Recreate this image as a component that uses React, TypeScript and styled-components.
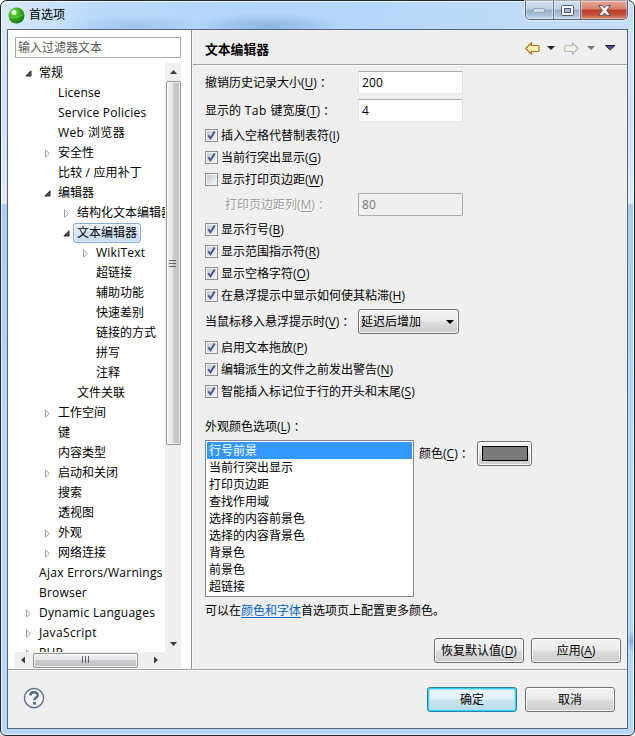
import React from "react";
import styled, { createGlobalStyle, css } from "styled-components";

const GlobalStyle = createGlobalStyle`
  html, body { margin: 0; padding: 0; background: #fff; }
  * { box-sizing: border-box; }
  body {
    font: 12px/16px "Open Sans", "Noto Sans CJK SC", sans-serif;
    color: #000;
    overflow: hidden;
  }
`;

const Window = styled.div`
  position: relative;
  width: 635px;
  height: 736px;
  padding: 0 6px 6px;
  display: flex;
  flex-direction: column;
  border: 1px solid #23272e;
  border-radius: 7px 7px 6px 6px;
  box-shadow: inset 0 0 0 1px rgba(255, 255, 255, 0.75);
  background:
    radial-gradient(ellipse 75px 13px at 268px 25px, rgba(100, 145, 200, 0.5), transparent),
    radial-gradient(ellipse 70px 12px at 135px 25px, rgba(120, 165, 215, 0.4), transparent),
    radial-gradient(ellipse 6px 12px at 632px 640px, rgba(90, 120, 190, 0.6), transparent),
    linear-gradient(105deg, #dcebfb 0, #bcdafa 90px, #b3d6fb 220px, rgba(179, 214, 251, 0) 430px) 0 0 / 100% 29px no-repeat,
    linear-gradient(90deg, #b7d8fa 60%, #c6def6) 0 0 / 100% 29px no-repeat,
    linear-gradient(#d5e6fa 0, #cfe2fa 120px, #dfecfa 202px, #abcdf2 204px, #b9d9fc 480px, #b6d8fc 100%);
`;

const TitleBar = styled.header`
  height: 28px;
  flex: none;
  display: flex;
  align-items: flex-start;
`;

const Orb = styled.svg`
  margin: 6px 0 0 1px;
  flex: none;
`;

const Title = styled.h1`
  margin: 6px 0 0 4px;
  flex: 1;
  font: inherit;
`;

const CaptionButtons = styled.div`
  display: flex;
  height: 19px;
  width: 103px;
  border: 1px solid #4e5f78;
  border-top: 0;
  border-radius: 0 0 5px 5px;
  overflow: hidden;
  box-shadow: 0 0 0 1px rgba(255, 255, 255, 0.6);
`;

const CaptionButton = styled.button<{ $w: number; $close?: boolean }>`
  width: ${(p) => p.$w}px;
  padding: 0;
  border: 0;
  border-right: ${(p) => (p.$close ? "0" : "1px solid #65788f")};
  display: flex;
  align-items: center;
  justify-content: center;
  box-shadow: inset 0 0 0 1px rgba(255, 255, 255, 0.4);
  background: ${(p) =>
    p.$close
      ? "linear-gradient(#e9a697 0, #d9806e 45%, #b83a25 50%, #c6503a 75%, #d98b6a 100%)"
      : "linear-gradient(#d3e1f1 0, #bed0e5 45%, #97adc9 50%, #a8bdd8 75%, #c5daf0 100%)"};
`;

const Client = styled.div`
  flex: 1;
  min-height: 0;
  display: flex;
  flex-direction: column;
  border: 1px solid #566676;
  background: #efefef;
`;

const Body = styled.div`
  height: 639px;
  flex: none;
  display: flex;
`;

const Sidebar = styled.aside`
  width: 184px;
  flex: none;
  padding: 7px 10px 0 7px;
  background: #fff;
  border-right: 1px solid #909090;
  display: flex;
  flex-direction: column;
`;

const Filter = styled.div`
  height: 21px;
  flex: none;
  border: 1px solid #a9a9ad;
  padding: 2px 2px 0;
  line-height: 15px;
  color: #555;
`;

const TreeArea = styled.div`
  margin-top: 5px;
  height: 589px;
  flex: none;
  display: flex;
`;

const Tree = styled.ul`
  width: 150px;
  margin: 0;
  padding: 0;
  list-style: none;
  overflow: hidden;
`;

const TreeRow = styled.li<{ $level: number }>`
  height: 20px;
  display: flex;
  align-items: center;
  padding-left: ${(p) => 9 + p.$level * 19}px;
  white-space: nowrap;
`;

const Twisty = styled.svg`
  width: 9px;
  height: 9px;
  flex: none;
  margin-right: 2px;
`;

const TreeLabel = styled.span<{ $selected?: boolean; $track?: number }>`
  height: 20px;
  padding: 0 3px;
  line-height: 17px;
  border: 1px solid transparent;
  border-radius: 3px;
  letter-spacing: ${(p) => p.$track ?? 0}px;
  ${(p) =>
    p.$selected &&
    css`
      border-color: #84acdd;
      background: linear-gradient(#ebf3fd, #c4dcfa);
      box-shadow: inset 0 0 0 1px rgba(255, 255, 255, 0.45);
    `}
`;

const VScroll = styled.div`
  width: 16px;
  display: flex;
  flex-direction: column;
  align-items: center;
  background: #efefef;
`;

const HScroll = styled.div`
  height: 16px;
  width: 166px;
  padding-right: 17px;
  display: flex;
  align-items: center;
  background: #efefef;
`;

const Arrow = styled.svg`
  flex: none;
  display: block;
`;

const Thumb = styled.div<{ $vertical?: boolean }>`
  flex: none;
  display: flex;
  align-items: center;
  justify-content: center;
  border: 1px solid #979797;
  border-radius: 2px;
  box-shadow: inset 0 0 0 1px rgba(255, 255, 255, 0.7);
  ${(p) =>
    p.$vertical
      ? css`
          width: 15px;
          height: 364px;
          background: linear-gradient(90deg, #f4f4f4, #e4e4e6 45%, #cdcdd1 50%, #bcbcc2);
        `
      : css`
          width: 105px;
          height: 15px;
          background: linear-gradient(#f4f4f4, #e4e4e6 45%, #cdcdd1 50%, #bcbcc2);
        `}
`;

const Spacer = styled.div`
  flex: 1;
`;

const Main = styled.main`
  flex: 1;
  display: flex;
  flex-direction: column;
  border-left: 1px solid #fafafa;
`;

const PageHeader = styled.div`
  height: 35px;
  flex: none;
  padding: 2px 10px 0 12px;
  display: flex;
  align-items: center;
  border-bottom: 1px solid #a0a0a0;
  box-shadow: 0 1px 0 #fafafa;
`;

const PageTitle = styled.h2`
  margin: 1px 0 0;
  flex: 1;
  font-size: 12.8px;
  line-height: 18px;
  font-weight: 700;
`;

const Form = styled.div`
  padding: 6px 6px 0 12px;
  display: flex;
  flex-direction: column;
`;

const FieldRow = styled.div<{ $h: number; $top?: number; $indent?: number }>`
  height: ${(p) => p.$h}px;
  margin-top: ${(p) => p.$top ?? 0}px;
  padding-left: ${(p) => p.$indent ?? 0}px;
  display: flex;
  align-items: center;
`;

const FieldLabel = styled.label<{ $w?: number; $disabled?: boolean }>`
  width: ${(p) => (p.$w ? `${p.$w}px` : "auto")};
  white-space: nowrap;
  ${(p) =>
    p.$disabled &&
    css`
      color: #9d9d9d;
      text-shadow: 1px 1px 0 #fff;
    `}
`;

const Colon = styled.span`
  padding-left: 3px;
`;

const Wide = styled.span`
  letter-spacing: 0.5px;
`;

const Key = styled.span`
  text-decoration: underline;
  text-underline-offset: 2px;
`;

const TextBox = styled.div<{ $disabled?: boolean }>`
  width: 105px;
  height: 23px;
  padding: 2px 3px;
  line-height: 17px;
  letter-spacing: 0.2px;
  border: 1px solid;
  border-radius: 1px;
  ${(p) =>
    p.$disabled
      ? css`
          border-color: #adadad;
          color: #777;
          background: #efefef;
        `
      : css`
          border-color: #abadb3 #dbdfe6 #e3e9ef #e2e3ea;
          background: #fff;
        `}
`;

const CheckRow = styled.label`
  height: 22px;
  display: flex;
  align-items: center;
  gap: 3px;
  white-space: nowrap;
`;

const CheckBox = styled.span`
  width: 13px;
  height: 13px;
  flex: none;
  margin-bottom: 1px;
  border: 1px solid #8e8f8f;
  padding: 1px;
  background: #f4f4f4;
`;

const CheckWell = styled.span`
  display: flex;
  width: 9px;
  height: 9px;
  background: linear-gradient(135deg, #c3c8cf, #f3f3f4);
`;

const buttonFace = css`
  border: 1px solid #707070;
  border-radius: 3px;
  background: linear-gradient(#f3f3f3 0, #ebebeb 48%, #dddddd 52%, #cdcdcd 100%);
  box-shadow: inset 0 0 0 1px rgba(255, 255, 255, 0.85);
`;

const Combo = styled.div`
  ${buttonFace}
  width: 101px;
  height: 25px;
  padding: 0 4px 0 2px;
  display: flex;
  align-items: center;
  justify-content: space-between;
`;

const PushButton = styled.button<{ $primary?: boolean }>`
  ${buttonFace}
  width: 90px;
  height: 25px;
  padding: 0;
  font: inherit;
  color: #000;
  ${(p) =>
    p.$primary &&
    css`
      border-color: #2c7fae;
      background: linear-gradient(#edf6fb 0, #e0f0f8 48%, #cbe4f1 52%, #b9dbec 100%);
      box-shadow: inset 0 0 0 1px #35d0f7, inset 0 0 0 2px #a5e6f8;
    `}
`;

const ListLabel = styled.div`
  margin-top: 16px;
  height: 17px;
  line-height: 16px;
`;

const ListRow = styled.div`
  margin-top: 4px;
  display: flex;
  align-items: flex-start;
`;

const ListBox = styled.ul`
  width: 209px;
  height: 157px;
  margin: 0;
  padding: 1px;
  list-style: none;
  border: 1px solid #828790;
  background: #fff;
`;

const ListItem = styled.li<{ $selected?: boolean }>`
  height: 17px;
  line-height: 17px;
  padding-left: 2px;
  color: ${(p) => (p.$selected ? "#fff" : "#000")};
  background: ${(p) => (p.$selected ? "#3399ff" : "transparent")};
`;

const ColorField = styled.div`
  margin: 1px 0 0 5px;
  height: 25px;
  display: flex;
  align-items: center;
`;

const ColorButton = styled.button`
  ${buttonFace}
  width: 55px;
  height: 25px;
  padding: 0 0 0 4px;
  display: flex;
  align-items: center;
`;

const Swatch = styled.span`
  width: 46px;
  height: 15px;
  border: 1px solid #000;
  background: #7b7b7b;
`;

const Hint = styled.p`
  margin: 6px 0 0;
  height: 17px;
  line-height: 16px;
`;

const Link = styled.a`
  color: #0066cc;
  text-decoration: underline;
  text-underline-offset: 2px;
`;

const Actions = styled.div`
  margin-top: 18px;
  display: flex;
  justify-content: flex-end;
  gap: 7px;
`;

const Footer = styled.footer`
  flex: 1;
  padding: 17px 12px 0 15px;
  display: flex;
  align-items: flex-start;
  gap: 8px;
  border-top: 1px solid #a0a0a0;
  box-shadow: inset 0 1px 0 #fafafa;
`;

type Node = { text: string; level: number; state?: "open" | "closed"; selected?: boolean; track?: number };

const nodes: Node[] = [
  { text: "常规", level: 0, state: "open" },
  { text: "License", level: 1, track: 0.15 },
  { text: "Service Policies", level: 1, track: 0.24 },
  { text: "Web 浏览器", level: 1, track: 0.4 },
  { text: "安全性", level: 1, state: "closed" },
  { text: "比较 / 应用补丁", level: 1, track: 0.15 },
  { text: "编辑器", level: 1, state: "open" },
  { text: "结构化文本编辑器", level: 2, state: "closed" },
  { text: "文本编辑器", level: 2, state: "open", selected: true },
  { text: "WikiText", level: 3, state: "closed", track: 0.25 },
  { text: "超链接", level: 3 },
  { text: "辅助功能", level: 3 },
  { text: "快速差别", level: 3 },
  { text: "链接的方式", level: 3 },
  { text: "拼写", level: 3 },
  { text: "注释", level: 3 },
  { text: "文件关联", level: 2 },
  { text: "工作空间", level: 1, state: "closed" },
  { text: "键", level: 1 },
  { text: "内容类型", level: 1 },
  { text: "启动和关闭", level: 1, state: "closed" },
  { text: "搜索", level: 1 },
  { text: "透视图", level: 1 },
  { text: "外观", level: 1, state: "closed" },
  { text: "网络连接", level: 1, state: "closed" },
  { text: "Ajax Errors/Warnings", level: 0, track: 0.29 },
  { text: "Browser", level: 0, track: 0.2 },
  { text: "Dynamic Languages", level: 0, state: "closed", track: 0.27 },
  { text: "JavaScript", level: 0, state: "closed", track: 0.35 },
  { text: "PHP", level: 0, state: "closed", track: 0.2 },
];

const colorItems = ["行号前景", "当前行突出显示", "打印页边距", "查找作用域", "选择的内容前景色", "选择的内容背景色", "背景色", "前景色", "超链接"];

const Mnemonic = ({ k }: { k: string }) => (
  <>
    (<Key>{k}</Key>)
  </>
);

const Check = ({ text, k, on = true }: { text: string; k: string; on?: boolean }) => (
  <CheckRow>
    <CheckBox>
      <CheckWell>
        {on && (
          <svg width="9" height="9" viewBox="0 0 9 9">
            <path d="M1.2 4.2 L3.5 7.3 L7.7 0.6" fill="none" stroke="#405693" strokeWidth="1.9" />
          </svg>
        )}
      </CheckWell>
    </CheckBox>
    <span>
      {text}
      <Mnemonic k={k} />
    </span>
  </CheckRow>
);

const ToolArrow = ({ forward }: { forward?: boolean }) => (
  <Arrow width="15" height="13" viewBox="0 0 15 13">
    <path
      d={forward ? "M14 6.5 L8.5 .8 V3.5 H1.5 L.6 4.3 V8.7 L1.5 9.5 H8.5 V12.2 Z" : "M.8 6.5 L6.5 .8 V3.5 H13.2 L14 4.3 V8.7 L13.2 9.5 H6.5 V12.2 Z"}
      fill={forward ? "#f0f0ea" : "#ffefb8"}
      stroke={forward ? "#b9b9b6" : "#b5740c"}
      strokeWidth="1.15"
    />
  </Arrow>
);

const Tools = styled.div`
  display: flex;
  align-items: center;
`;

const Drop = styled.svg<{ $left: number; $right: number }>`
  margin: 0 ${(p) => p.$right}px 0 ${(p) => p.$left}px;
`;

export default function App() {
  return (
    <>
      <GlobalStyle />
      <Window>
        <TitleBar>
          <Orb width="17" height="17" viewBox="0 0 17 17">
            <defs>
              <radialGradient id="orb" cx="35%" cy="30%" r="75%">
                <stop offset="0" stopColor="#8be45a" />
                <stop offset=".45" stopColor="#3db41f" />
                <stop offset="1" stopColor="#12750b" />
              </radialGradient>
            </defs>
            <circle cx="8.5" cy="8.5" r="8" fill="url(#orb)" />
            <path d="M1 10 Q8 12 15.5 7.5" fill="none" stroke="#7fdb50" strokeOpacity=".6" />
            <circle cx="6" cy="5.5" r="2.4" fill="#fff" fillOpacity=".85" />
          </Orb>
          <Title>首选项</Title>
          <CaptionButtons>
            <CaptionButton $w={28} aria-label="最小化">
              <svg width="13" height="6">
                <rect x=".5" y="1.5" width="11" height="4" rx="1" fill="#d3dbe4" stroke="#96a5b8" />
              </svg>
            </CaptionButton>
            <CaptionButton $w={27} aria-label="最大化">
              <svg width="13" height="11">
                <rect x=".5" y=".5" width="12" height="10" rx="1" fill="#fff" stroke="#535a69" />
                <rect x="3.5" y="3.5" width="6" height="4" fill="#a5bad4" stroke="#535a69" />
              </svg>
            </CaptionButton>
            <CaptionButton $w={46} $close aria-label="关闭">
              <svg width="13" height="11" viewBox="0 0 13 11">
                <path
                  d="M.7 .6 H4.4 L6.5 2.9 L8.6 .6 H12.3 L8.7 5.4 L12.3 10.4 H8.6 L6.5 7.9 L4.4 10.4 H.7 L4.3 5.4 Z"
                  fill="#fff"
                  stroke="#53506a"
                />
              </svg>
            </CaptionButton>
          </CaptionButtons>
        </TitleBar>
        <Client>
          <Body>
            <Sidebar>
              <Filter>输入过滤器文本</Filter>
              <TreeArea>
                <Tree>
                  {nodes.map((n) => (
                    <TreeRow key={n.text} $level={n.level}>
                      <Twisty viewBox="0 0 9 9">
                        {n.state === "open" && <path d="M7 1.8 V7 H1.8 Z" fill="#505050" stroke="#262626" />}
                        {n.state === "closed" && <path d="M2.5 .8 V8.2 L6.4 4.5 Z" fill="#fff" stroke="#a2a2a2" />}
                      </Twisty>
                      <TreeLabel $selected={n.selected} $track={n.track}>
                        {n.text}
                      </TreeLabel>
                    </TreeRow>
                  ))}
                </Tree>
                <VScroll>
                  <Arrow width="16" height="18">
                    <path d="M5 11 L8.5 7 L12 11 Z" fill="#3c3c3c" />
                  </Arrow>
                  <Thumb $vertical>
                    <svg width="8" height="8">
                      <path d="M0 1.5H7M0 4.5H7M0 7.5H7" stroke="#62626a" />
                    </svg>
                  </Thumb>
                  <Spacer />
                  <Arrow width="16" height="17">
                    <path d="M5 7 L8.5 11 L12 7 Z" fill="#3c3c3c" />
                  </Arrow>
                </VScroll>
              </TreeArea>
              <HScroll>
                <Arrow width="18" height="16">
                  <path d="M10 4.5 L6 8 L10 11.5 Z" fill="#3c3c3c" />
                </Arrow>
                <Thumb>
                  <svg width="8" height="8">
                    <path d="M.5 0V7M3.5 0V7M6.5 0V7" stroke="#62626a" />
                  </svg>
                </Thumb>
                <Spacer />
                <Arrow width="16" height="16">
                  <path d="M6 4.5 L10 8 L6 11.5 Z" fill="#3c3c3c" />
                </Arrow>
              </HScroll>
            </Sidebar>
            <Main>
              <PageHeader>
                <PageTitle>文本编辑器</PageTitle>
                <Tools>
                  <ToolArrow />
                  <Drop $left={7} $right={9} width="8" height="4">
                    <path d="M0 0H8L4 4Z" fill="#222" />
                  </Drop>
                  <ToolArrow forward />
                  <Drop $left={8} $right={10} width="8" height="4">
                    <path d="M0 0H8L4 4Z" fill="#777" />
                  </Drop>
                  <svg width="12" height="6">
                    <path d="M.5 .5H10L5.2 5Z" fill="#5a4f9c" stroke="#1f1b3a" />
                  </svg>
                </Tools>
              </PageHeader>
              <Form>
                <FieldRow $h={23}>
                  <FieldLabel $w={153}>
                    撤销历史记录大小
                    <Mnemonic k="U" />
                    <Colon>：</Colon>
                  </FieldLabel>
                  <TextBox>200</TextBox>
                </FieldRow>
                <FieldRow $h={23} $top={5}>
                  <FieldLabel $w={153}>
                    显示的<Wide> Tab </Wide>键宽度
                    <Mnemonic k="T" />
                    <Colon>：</Colon>
                  </FieldLabel>
                  <TextBox>4</TextBox>
                </FieldRow>
                <FieldRow $h={3} />
                <Check text="插入空格代替制表符" k="I" />
                <Check text="当前行突出显示" k="G" />
                <Check text="显示打印页边距" k="W" on={false} />
                <FieldRow $h={23} $top={2} $indent={20}>
                  <FieldLabel $w={133} $disabled>
                    打印页边距列
                    <Mnemonic k="M" />
                    <Colon>：</Colon>
                  </FieldLabel>
                  <TextBox $disabled>80</TextBox>
                </FieldRow>
                <FieldRow $h={3} />
                <Check text="显示行号" k="B" />
                <Check text="显示范围指示符" k="R" />
                <Check text="显示空格字符" k="O" />
                <Check text="在悬浮提示中显示如何使其粘滞" k="H" />
                <FieldRow $h={25} $top={2}>
                  <FieldLabel $w={153}>
                    当鼠标移入悬浮提示时
                    <Mnemonic k="V" />
                    <Colon>：</Colon>
                  </FieldLabel>
                  <Combo>
                    延迟后增加
                    <svg width="8" height="4">
                      <path d="M0 0H8L4 4Z" fill="#000" />
                    </svg>
                  </Combo>
                </FieldRow>
                <FieldRow $h={3} />
                <Check text="启用文本拖放" k="P" />
                <Check text="编辑派生的文件之前发出警告" k="N" />
                <Check text="智能插入标记位于行的开头和末尾" k="S" />
                <ListLabel>
                  外观颜色选项
                  <Mnemonic k="L" />
                  <Colon>：</Colon>
                </ListLabel>
                <ListRow>
                  <ListBox>
                    {colorItems.map((t, i) => (
                      <ListItem key={t} $selected={i === 0}>
                        {t}
                      </ListItem>
                    ))}
                  </ListBox>
                  <ColorField>
                    <FieldLabel $w={58}>
                      颜色
                      <Mnemonic k="C" />
                      <Colon>：</Colon>
                    </FieldLabel>
                    <ColorButton>
                      <Swatch />
                    </ColorButton>
                  </ColorField>
                </ListRow>
                <Hint>
                  可以在<Link>颜色和字体</Link>首选项页上配置更多颜色。
                </Hint>
                <Actions>
                  <PushButton>
                    恢复默认值
                    <Mnemonic k="D" />
                  </PushButton>
                  <PushButton>
                    应用
                    <Mnemonic k="A" />
                  </PushButton>
                </Actions>
              </Form>
            </Main>
          </Body>
          <Footer>
            <svg width="22" height="22" viewBox="0 0 22 22">
              <circle cx="11" cy="11" r="9.6" fill="#f4f5f8" stroke="#566a8c" strokeWidth="1.3" />
              <path d="M7.3 8.6 C7.3 4.2 14.7 4.2 14.7 8.2 C14.7 10.6 11.4 10.6 11.4 13.2" fill="none" stroke="#566a8c" strokeWidth="2.5" />
              <rect x="10" y="15" width="3" height="2.6" fill="#566a8c" />
            </svg>
            <Spacer />
            <PushButton $primary>确定</PushButton>
            <PushButton>取消</PushButton>
          </Footer>
        </Client>
      </Window>
    </>
  );
}
